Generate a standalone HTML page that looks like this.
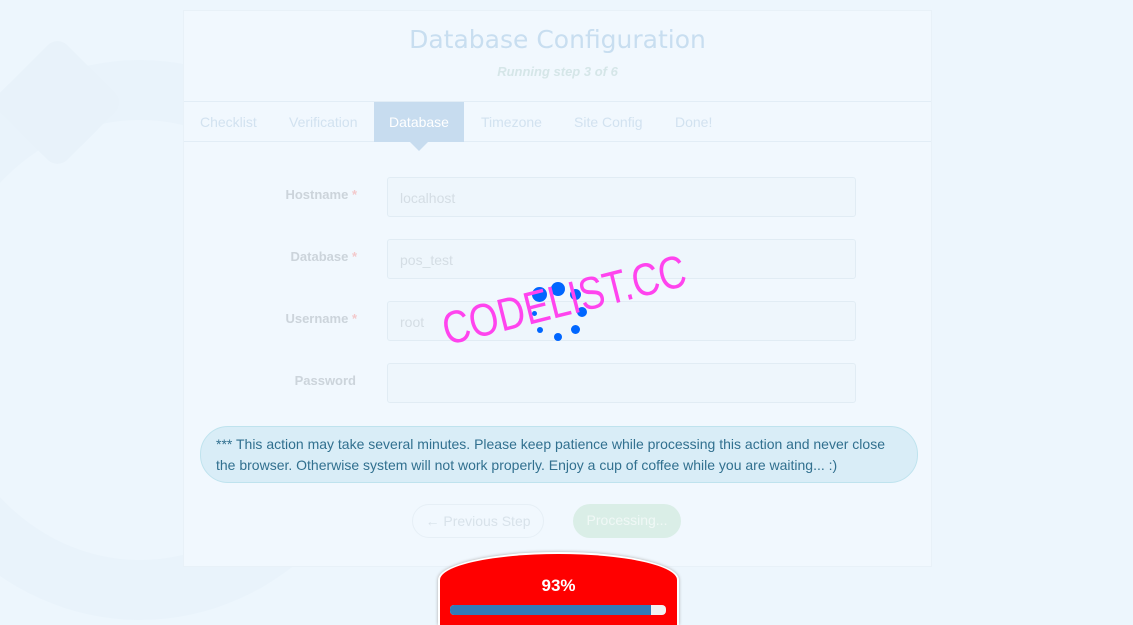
<!DOCTYPE html>
<html><head><meta charset="utf-8"><style>
*{box-sizing:border-box;margin:0;padding:0}
html,body{width:1133px;height:625px;overflow:hidden}
body{background:#edf6fd;font-family:"Liberation Sans",sans-serif;position:relative}
.bg1{position:absolute;left:-120px;top:60px;width:520px;height:560px;border-radius:50%;border:60px solid #e9f3fb;}
.bg2{position:absolute;left:10px;top:55px;width:95px;height:95px;background:#e8f2fa;transform:rotate(45deg);border-radius:14px}
.card{position:absolute;left:183px;top:10px;width:749px;height:557px;background:#f1f8fe;border:1px solid #e8f1f8}
h1{position:absolute;left:0;width:100%;top:14px;text-align:center;font-family:"DejaVu Sans",sans-serif;font-size:25px;font-weight:normal;color:#c8def0}
.sub{position:absolute;left:0;width:100%;top:53px;text-align:center;font-size:13px;font-style:italic;font-weight:bold;color:#d5e6e8}
.tabs{position:absolute;left:0;top:90px;width:100%;height:41px;border-top:1px solid #e2edf6;border-bottom:1px solid #e2edf6}
.tab{position:absolute;top:0;height:40px;line-height:40px;font-size:14px;color:#d2e2f0}
.act{background:#c7dcef;color:#fff;text-align:center}
.arrow{position:absolute;left:225px;top:130px;width:0;height:0;border-left:10px solid transparent;border-right:10px solid transparent;border-top:10px solid #c7dcef}
.lbl{position:absolute;width:173px;text-align:right;font-size:13px;font-weight:bold;color:#ccd4db}
.lbl span{color:#f3c9cb}
.inp{position:absolute;left:203px;width:469px;height:40px;border:1px solid #e1ecf4;border-radius:3px;background:#eef6fc;font-size:14px;color:#d4dde4;padding:12px 12px}
.alert{position:absolute;left:16px;top:415px;width:718px;height:57px;background:#d9edf7;border:1px solid #bfe3ee;border-radius:28px;font-size:14px;line-height:21px;color:#31708f;padding:7px 15px}
.btn{position:absolute;top:493px;height:34px;border-radius:17px;font-size:14px;line-height:32px;text-align:center}
.red{position:absolute;left:438px;top:552px;width:241px;height:73px;background:#f00;border:2px solid #fff;border-bottom:none;border-radius:120px 120px 0 0/28px 28px 0 0;box-shadow:0 0 3px #aaa}
.pct{position:absolute;width:100%;top:22px;text-align:center;color:#fff;font-weight:bold;font-size:17px}
.bar{position:absolute;left:10px;top:51px;width:216px;height:10px;background:#f2f2f2;border-radius:4px;overflow:hidden}
.bar div{width:201px;height:100%;background:#337ab7}
.wm{position:absolute;left:449px;top:304px;height:50px;line-height:50px;font-size:46px;color:#ff44ee;transform:rotate(-14deg) scaleX(0.82);transform-origin:left bottom;white-space:nowrap}
.dot{position:absolute;background:#0066ff;border-radius:50%}
</style></head><body>
<div class="bg1"></div><div class="bg2"></div>
<div class="card">
<h1>Database Configuration</h1>
<div class="sub">Running step 3 of 6</div>
<div class="tabs">
<div class="tab" style="left:16px">Checklist</div>
<div class="tab" style="left:105px">Verification</div>
<div class="tab act" style="left:190px;width:90px">Database</div>
<div class="tab" style="left:297px">Timezone</div>
<div class="tab" style="left:390px">Site Config</div>
<div class="tab" style="left:491px">Done!</div>
</div>
<div class="arrow"></div>
<div class="lbl" style="top:176px">Hostname <span>*</span></div>
<div class="inp" style="top:166px">localhost</div>
<div class="lbl" style="top:238px">Database <span>*</span></div>
<div class="inp" style="top:228px">pos_test</div>
<div class="lbl" style="top:300px">Username <span>*</span></div>
<div class="inp" style="top:290px">root</div>
<div class="lbl" style="top:362px;width:172px">Password</div>
<div class="inp" style="top:352px"></div>
<div class="alert">*** This action may take several minutes. Please keep patience while processing this action and never close the browser. Otherwise system will not work properly. Enjoy a cup of coffee while you are waiting... :)</div>
<div class="btn" style="left:228px;width:132px;border:1px solid #e6eff6;color:#d8e2ea">← Previous Step</div>
<div class="btn" style="left:389px;width:108px;background:#daeee7;color:#f0f8f6">Processing...</div>
</div>
<div class="dot" style="left:532px;top:287px;width:15px;height:15px"></div>
<div class="dot" style="left:551px;top:282px;width:14px;height:14px"></div>
<div class="dot" style="left:570px;top:289px;width:11px;height:11px"></div>
<div class="dot" style="left:577px;top:307px;width:10px;height:10px"></div>
<div class="dot" style="left:571px;top:325px;width:9px;height:9px"></div>
<div class="dot" style="left:554px;top:333px;width:8px;height:8px"></div>
<div class="dot" style="left:537px;top:327px;width:6px;height:6px"></div>
<div class="dot" style="left:532px;top:311px;width:5px;height:5px"></div>
<div class="wm">CODELIST.CC</div>
<div class="red"><div class="pct">93%</div><div class="bar"><div></div></div></div>
</body></html>
